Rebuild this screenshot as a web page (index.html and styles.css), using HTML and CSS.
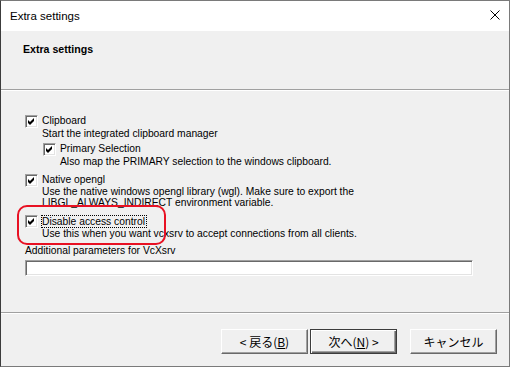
FILE: index.html
```html
<!DOCTYPE html>
<html lang="en">
<head>
  <meta charset="UTF-8" />
  <title>Extra settings</title>
  <link rel="stylesheet" href="styles.css">
</head>
<body>
  <div class="window">
    <div class="titlebar">
      <span class="title">Extra settings</span>
      <svg class="close" width="10" height="10" viewBox="0 0 10 10">
        <path d="M0.5 0.5 L9.5 9.5 M9.5 0.5 L0.5 9.5" stroke="#000" stroke-width="1" fill="none"/>
      </svg>
    </div>

    <div class="header">
      <h1>Extra settings</h1>
    </div>

    <div class="content">
      <div class="group first">
        <div class="opt"><span class="cb"><svg width="7" height="7" viewBox="0 0 7 7"><path d="M0 2 L2 4 L6 0 L6 3 L2 7 L0 5 Z" fill="#000"/></svg></span><span>Clipboard</span></div>
        <div class="desc">Start the integrated clipboard manager</div>

        <div class="group sub">
          <div class="opt"><span class="cb"><svg width="7" height="7" viewBox="0 0 7 7"><path d="M0 2 L2 4 L6 0 L6 3 L2 7 L0 5 Z" fill="#000"/></svg></span><span>Primary Selection</span></div>
          <div class="desc">Also map the PRIMARY selection to the windows clipboard.</div>
        </div>
      </div>

      <div class="group native">
        <div class="opt"><span class="cb"><svg width="7" height="7" viewBox="0 0 7 7"><path d="M0 2 L2 4 L6 0 L6 3 L2 7 L0 5 Z" fill="#000"/></svg></span><span>Native opengl</span></div>
        <div class="desc">Use the native windows opengl library (wgl). Make sure to export the<br>LIBGL_ALWAYS_INDIRECT environment variable.</div>
      </div>

      <div class="group access">
        <div class="opt"><span class="cb"><svg width="7" height="7" viewBox="0 0 7 7"><path d="M0 2 L2 4 L6 0 L6 3 L2 7 L0 5 Z" fill="#000"/></svg></span><span class="focus">Disable access control</span></div>
        <div class="desc">Use this when you want vcxsrv to accept connections from all clients.</div>
        <div class="highlight"></div>
      </div>

      <div class="params">Additional parameters for VcXsrv</div>
      <div class="field"></div>
    </div>

    <div class="footer">
      <button class="btn">&lt; 戻る(<u>B</u>)</button>
      <button class="btn default">次へ(<u>N</u>) &gt;</button>
      <button class="btn cancel">キャンセル</button>
    </div>
  </div>
</body>
</html>
```

FILE: styles.css
```css
body {
  margin: 0;
  background-color: #f0f0f0;
}

.window {
  width: 510px;
  height: 367px;
  box-sizing: border-box;
  border: 1px solid #7a7a7a;
  border-left-color: #3c3c3c;
  background-color: #f0f0f0;
  display: flex;
  flex-direction: column;
  font-family: 'Liberation Sans', sans-serif;
  color: #000;
}

.titlebar {
  height: 30px;
  background-color: #fff;
  display: flex;
  align-items: center;
  justify-content: space-between;
  padding: 0 9px 0 9px;
  flex-shrink: 0;
}

.title {
  font-size: 11.5px;
}

.close {
  display: block;
  margin-top: -2px;
}

.header {
  flex-shrink: 0;
  border-bottom: 1px solid #a0a0a0;
  box-shadow: 0 1px 0 #fff;
  box-sizing: border-box;
  height: 59px;
  padding: 10px 0 0 22px;
}

h1 {
  margin: 0;
  font-size: 10.6px;
  font-weight: bold;
  line-height: 16px;
}

.content {
  flex: 1;
  padding: 25px 0 0 24px;
  font-size: 10.3px;
  position: relative;
}

.group {
  position: relative;
}

.sub {
  margin-top: 4px;
  padding-left: 18px;
}

.native {
  margin-top: 7px;
}

.access {
  margin-top: 7px;
}

.opt {
  display: flex;
  align-items: center;
  height: 12px;
  line-height: 12px;
}

.cb {
  width: 13px;
  height: 13px;
  box-sizing: border-box;
  background-color: #fff;
  border: 1px solid;
  border-color: #a0a0a0 #fff #fff #a0a0a0;
  box-shadow: inset 1px 1px 0 #696969, inset -1px -1px 0 #e3e3e3;
  margin-right: 4px;
  display: flex;
  align-items: center;
  justify-content: center;
  flex-shrink: 0;
}

.cb svg {
  display: block;
}

.focus {
  border: 1px dotted #000;
  padding: 0 1px 0 0;
  margin-left: -1px;
  line-height: 11px;
}

.desc {
  padding-left: 17px;
  line-height: 11px;
  margin-top: 1px;
}

.native .desc {
  margin-top: 0;
}

.highlight {
  position: absolute;
  left: -8px;
  top: -10px;
  width: 145px;
  height: 36px;
  border: 2px solid #e81123;
  border-radius: 10px;
}

.params {
  margin-top: 6px;
  line-height: 12px;
}

.field {
  margin-top: 3px;
  width: 448px;
  height: 16px;
  box-sizing: border-box;
  background-color: #fff;
  border: 1px solid;
  border-color: #a0a0a0 #fff #fff #a0a0a0;
  box-shadow: inset 1px 1px 0 #696969, inset -1px -1px 0 #e3e3e3;
}

.footer {
  height: 54px;
  flex-shrink: 0;
  border-top: 1px solid #a0a0a0;
  box-shadow: inset 0 1px 0 #fff;
  box-sizing: border-box;
  display: flex;
  justify-content: flex-end;
  align-items: flex-start;
  padding: 16px 12px 0 0;
}

.btn {
  width: 87px;
  height: 25px;
  font-family: 'Noto Sans CJK JP', sans-serif;
  font-size: 12px;
  color: #000;
  background-color: #f0f0f0;
  border: 1px solid;
  border-color: #fff #696969 #696969 #fff;
  box-shadow: inset -1px -1px 0 #a0a0a0;
  padding: 0;
  line-height: 20px;
}

.default {
  margin-left: 2px;
  border: 1px solid #3c3c3c;
  box-shadow: inset 1px 1px 0 #fff, inset -1px -1px 0 #696969, inset -2px -2px 0 #a0a0a0;
}

.cancel {
  margin-left: 13px;
}
```
